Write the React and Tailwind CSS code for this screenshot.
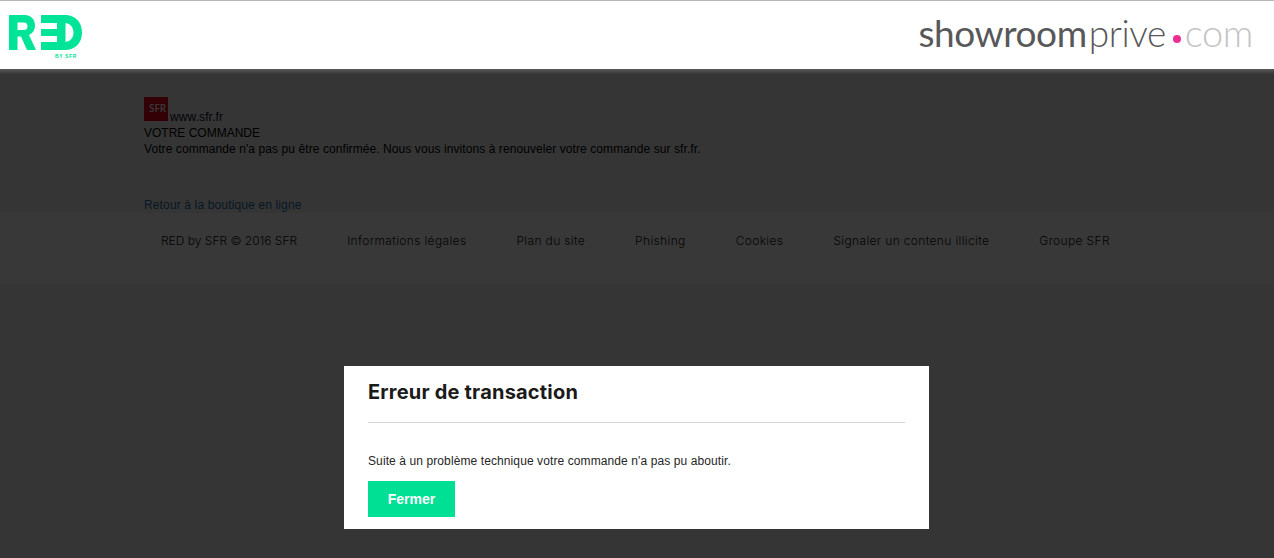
// App.jsx
import React from 'react';

const footerLinks = [
  'Informations légales',
  'Plan du site',
  'Phishing',
  'Cookies',
  'Signaler un contenu illicite',
  'Groupe SFR',
];

// RED by SFR logo
const RedLogo = () => (
  <svg width="74" height="44" viewBox="0 0 74 44" className="block">
    <g fill="#00e497">
      {/* R */}
      <path d="M0 0h15.500C22 0 26 4.500 26 10.500c0 4.500-2.500 8-6 9.500l7 15h-9l-6-13.500H8.500V35H0zM8.500 7.500v7.500h6.500c2.300 0 3.500-1.700 3.500-3.800S17.300 7.500 15 7.500z" />
      {/* E bars + D */}
      <path d="M32 0h24c10 0 17 7 17 17.500S66 35 56 35H32v-8h23.500c5.500 0 9-4 9-9.500S61 8 55.500 8H32z" />
      <rect x="32" y="14" width="16" height="7" />
      <rect x="48" y="8" width="8.500" height="19" />
    </g>
    <text x="46" y="42.500" fontSize="5" fontWeight="700" letterSpacing="0.6" fill="#00e497" fontFamily="'Liberation Sans', sans-serif">BY SFR</text>
  </svg>
);

const App = () => {
  return (
    <div className="relative h-[558px] overflow-hidden bg-[#f0f0f0] font-['Liberation_Sans',Arial,sans-serif] text-xs text-black">
      {/* Header stays above the dimming layer */}
      <header className="relative z-20 flex h-[69px] items-start justify-between border-t border-[#b5b5b5] bg-white pl-[9px] pr-[21px]">
        <div className="pt-[14px]">
          <RedLogo />
        </div>
        <div className="flex items-baseline pt-[7px] font-['Lato',sans-serif] text-[37px] leading-[48px] tracking-[-0.4px]">
          <span className="font-normal text-[#58585a]">showroom</span>
          <span className="ml-[2px] font-light text-[#58585a]">prive</span>
          <span className="ml-[7px] mr-1 inline-block h-2 w-2 -translate-y-1 rounded-full bg-[#ec2e93]"></span>
          <span className="text-[38px] font-light text-[#c4c4c4]">com</span>
        </div>
      </header>
      <div className="absolute left-0 right-0 top-[69px] z-20 h-[5px] bg-gradient-to-b from-[#5a5a5a] to-transparent"></div>

      <main className="mx-auto w-[986px] pt-[28px]">
        <div className="flex h-[28px] items-end">
          <div className="mb-1 flex h-6 w-6 items-center justify-center overflow-hidden bg-[#e2001a] pl-[3px] font-['Open_Sans',sans-serif] text-[10px] font-semibold text-white">
            SFR
          </div>
          <span className="ml-[2px] leading-4 tracking-[0.1px] text-[#0b0b2a]">www.sfr.fr</span>
        </div>
        <p className="leading-4">VOTRE COMMANDE</p>
        <p className="leading-4 tracking-[0.08px]">Votre commande n'a pas pu être confirmée. Nous vous invitons à renouveler votre commande sur sfr.fr.</p>
        <a className="mt-10 block leading-4 tracking-[0.14px] text-[#1d6fa5]">Retour à la boutique en ligne</a>
      </main>

      <footer className="h-[71px] bg-white pt-5">
        <ul className="mx-auto flex w-[986px] gap-[50px] pl-[17px] font-['Inter',sans-serif] text-xs font-light leading-4 tracking-[0.35px] text-[#111]">
          <li className="tracking-normal">RED by SFR © 2016 SFR</li>
          {footerLinks.map((link) => (
            <li key={link}>{link}</li>
          ))}
        </ul>
      </footer>

      {/* Dimming layer */}
      <div className="absolute inset-0 z-10 bg-black/[0.78]"></div>

      {/* Error dialog */}
      <div className="absolute left-[344px] top-[366px] z-30 h-[163px] w-[585px] bg-white px-6">
        <h2 className="flex h-[57px] items-center border-b border-[#d4d4d4] pb-1 font-['Inter',sans-serif] text-xl font-bold tracking-[0.2px] text-[#1a1a1a]">
          Erreur de transaction
        </h2>
        <p className="mt-[30px] leading-4 tracking-[0.1px] text-[#262626]">Suite à un problème technique votre commande n'a pas pu aboutir.</p>
        <button className="mt-3 h-9 w-[87px] bg-[#00e095] text-sm font-bold text-white">Fermer</button>
      </div>
    </div>
  );
};

export default App;
